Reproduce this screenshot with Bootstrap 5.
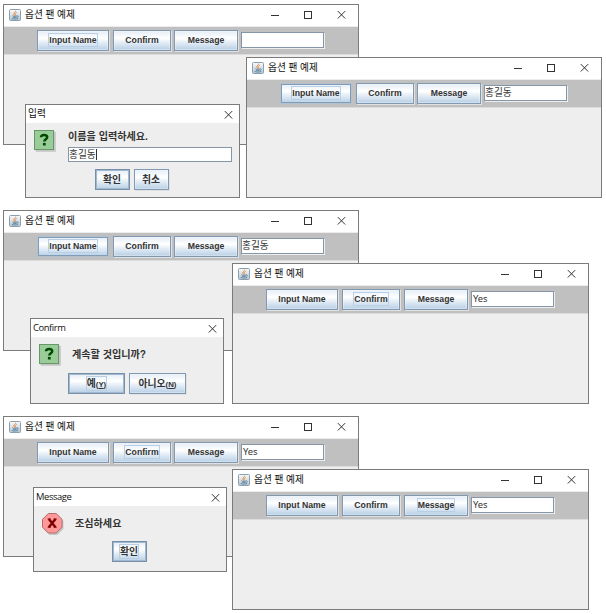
<!DOCTYPE html>
<html lang="ko">
<head>
  <meta charset="UTF-8" />
  <meta name="viewport" content="width=device-width, initial-scale=1.0"/>
  <title>옵션 팬 예제</title>

  <!-- Bootstrap CSS -->
  <link href="https://cdn.jsdelivr.net/npm/bootstrap@5.3.3/dist/css/bootstrap.min.css" rel="stylesheet" />

  <style>
    body {
      width: 606px;
      height: 614px;
      overflow: hidden;
      background: #fff;
      color: #333;
      font: 9.7px/1 "Liberation Sans", "Noto Sans CJK KR", sans-serif;
    }

    /* Windows on the desktop */
    .frame, .dialog {
      position: absolute;
      background: #eee;
      border: 1px solid #7b7b7b;
    }
    .frame { width: 356px; height: 141px; }
    .frame-1 { left: 3px; top: 4px; }
    .frame-2 { left: 246px; top: 57px; }
    .frame-3 { left: 3px; top: 210px; }
    .frame-4 { left: 232px; top: 263px; width: 357px; }
    .frame-5 { left: 3px; top: 416px; }
    .frame-6 { left: 232px; top: 469px; width: 357px; }
    .dialog-1 { left: 25px; top: 104px; width: 215px; height: 94px; }
    .dialog-2 { left: 30px; top: 318px; width: 194px; height: 86px; }
    .dialog-3 { left: 33px; top: 487px; width: 194px; height: 85px; }

    .titlebar {
      height: 22px;
      padding: 0 12px 1px 5px;
      background: #fff;
      border-bottom: 1px solid #ececec;
      color: #111;
    }
    .titlebar span { margin-left: 4px; white-space: pre; }
    .win-btns { gap: 24px; margin-top: 5px; }
    .win-btns svg:last-child { margin-left: 1px; }
    .dialog .titlebar { height: 18px; padding: 0 6px 0 2px; border: 0; }
    .dialog .titlebar span { margin-left: 0; }
    .dialog .titlebar .latin { font-family: "Open Sans", sans-serif; font-size: 9.4px; letter-spacing: -.4px; }
    svg { display: block; flex: none; }

    /* Metal look */
    .toolbar {
      height: 28px;
      padding: 3px 0 0 33px;
      gap: 3px;
      background: #c0c0c0;
      border-bottom: 1px solid #dcdcdc;
    }
    .metal {
      height: 21px;
      padding: 0;
      border: 1px solid #8098b0;
      border-radius: 0;
      background: linear-gradient(#e4edf6 0, #fff 38%, #e4edf6 60%, #b8cfe5 100%);
      box-shadow: inset 0 0 0 1px rgba(255, 255, 255, .3), 1px 1px 0 #e1e1e1;
      color: #333;
      font: bold 8.7px/1 "Liberation Sans", "Noto Sans CJK KR", sans-serif;
      white-space: nowrap;
    }
    .w-input { width: 72px; }
    .w-confirm { width: 58px; margin-left: 1px; }
    .w-message { width: 64px; }
    .frame-4 .w-message, .frame-6 .w-message { margin-left: 1px; }
    .focused span { outline: 1px solid #b8cfe5; padding: 1px 0; }
    .thick { border-color: #7590aa; box-shadow: inset 0 0 0 1px #a3b8cc; }
    .rollover { border-color: #b4c0cc; box-shadow: inset 0 0 0 1px #7f9cb9; }
    .field {
      height: 16px;
      border: 1px solid #8496a8;
      box-shadow: 1px 1px 0 #eee;
      background: #fff;
      font-size: 9.7px;
      color: #333;
    }
    .toolbar .field { width: 83px; margin-top: 2px; }
    .toolbar .latin { font-family: "Noto Sans", sans-serif; font-size: 9.4px; padding-left: 1px; }
    .prompt { font-size: 10.1px; font-weight: bold; white-space: nowrap; }

    /* Dialog bodies */
    .ask-body { padding: 7px 8px 0 8px; gap: 12px; }
    .ask-text { margin-left: -1px; padding-top: 2px; }
    .ask-text .prompt { padding-left: 1px; }
    .ask-text .field { width: 164px; height: 15px; margin: 5px 0 0 1px; }
    .caret { width: 1px; height: 11px; background: #333; }
    .ask-btns { margin: 7px 2px 0 0; gap: 4px; }
    .ask-btns .metal { width: 35px; font-size: 9.8px; }
    .confirm-body { padding: 7px 8px 0 8px; gap: 11px; }
    .confirm-body .prompt { padding-top: 6px; }
    .confirm-btns { padding-left: 37px; margin-top: 7px; gap: 4px; }
    .confirm-btns .metal { width: 57px; font-size: 9.8px; }
    .confirm-btns .metal small { font-size: 7.8px; }
    .notice-btns { margin: 6px 2px 0 0; }
    .notice-btns .metal { width: 35px; font-size: 9.8px; }
  </style>
</head>
<body class="position-relative m-0">

  <!-- Shared icons -->
  <svg width="0" height="0" class="position-absolute">
    <defs>
      <linearGradient id="tile" x1="0" y1="0" x2="0" y2="1">
        <stop offset="0" stop-color="#f8fafb"/><stop offset="1" stop-color="#b5c6d3"/>
      </linearGradient>
      <symbol id="java" viewBox="0 0 12 12">
        <rect x=".5" y=".5" width="11" height="11" rx="1" fill="url(#tile)" stroke="#8ba0ae"/>
        <path d="M6.5 1.7C7 3 4.4 3.7 4.8 5.1c.1.6.8 1 .8 1.5M7.7 3.2C6.3 4 5.7 4.6 6.4 5.5c.3.4.1.8-.2 1.1" fill="none" stroke="#e78231" stroke-width=".9"/>
        <path d="M3.4 6.9c1.4.6 3.5.5 4.8 0M4 8.2c1.1.5 2.6.4 3.7 0M8.3 6.8c1.5-.2 1.2 1.3-.2 1.6M2.7 9.4c1.6.8 4.8.8 6.5 0" fill="none" stroke="#4a7591" stroke-width=".8"/>
      </symbol>
      <symbol id="min" viewBox="0 0 9 9"><path d="M1 5.5h8" stroke="#333"/></symbol>
      <symbol id="max" viewBox="0 0 9 9"><rect x="1.5" y="1.5" width="7" height="7" fill="none" stroke="#333"/></symbol>
      <symbol id="close" viewBox="0 0 9 9"><path d="M.8 1.1l7.4 7.4M8.2 1.1L.8 8.5" stroke="#333" stroke-width="1" fill="none"/></symbol>
      <symbol id="question" viewBox="0 0 22 22">
        <path d="M2 2h20v20H2z" fill="#bbb" opacity=".45"/>
        <path d="M1.5 1.5h20v20h-20z" fill="#aaa" opacity=".4"/>
        <rect x=".5" y=".5" width="19" height="19" fill="#99cc99" stroke="#669966"/>
        <path d="M7 7.3C7.1 5.5 8.2 4.9 10.1 4.9c2 0 3.1.9 3.1 2.3 0 2.1-2.9 2-2.9 4.3" fill="none" stroke="#004b00" stroke-width="2.5"/>
        <rect x="8.9" y="12.9" width="2.8" height="2.6" fill="#004b00"/>
      </symbol>
      <symbol id="error" viewBox="0 0 22 22">
        <path d="M7.5 2h8l6 6v8l-6 6h-8l-6-6V8z" fill="#aaa" opacity=".55"/>
        <path d="M6.3.5h7.9l5.8 5.8v7.9L14.2 20H6.3L.5 14.2V6.3z" fill="#ff9999" stroke="#b46a6a"/>
        <path d="M6.8 6l6.7 8.2M13.5 6l-6.7 8.2" stroke="#800000" stroke-width="2.4"/>
        <path d="M5.7 6h3M11.7 6h3M5.7 14.2h3M11.7 14.2h3" stroke="#800000" stroke-width="1"/>
      </symbol>
    </defs>
  </svg>

  <!-- Input example -->
  <div class="frame frame-1">
    <div class="titlebar d-flex align-items-center">
      <svg width="12" height="12"><use href="#java"/></svg><span>옵션 팬 예제</span>
      <div class="win-btns d-flex align-self-start ms-auto">
        <svg width="9" height="9"><use href="#min"/></svg><svg width="9" height="9"><use href="#max"/></svg><svg width="9" height="9"><use href="#close"/></svg>
      </div>
    </div>
    <div class="toolbar d-flex align-items-start">
      <button class="btn metal w-input focused"><span>Input Name</span></button>
      <button class="btn metal w-confirm"><span>Confirm</span></button>
      <button class="btn metal w-message"><span>Message</span></button>
      <div class="field d-flex align-items-center"></div>
    </div>
  </div>

  <div class="frame frame-2">
    <div class="titlebar d-flex align-items-center">
      <svg width="12" height="12"><use href="#java"/></svg><span>옵션 팬 예제</span>
      <div class="win-btns d-flex align-self-start ms-auto">
        <svg width="9" height="9"><use href="#min"/></svg><svg width="9" height="9"><use href="#max"/></svg><svg width="9" height="9"><use href="#close"/></svg>
      </div>
    </div>
    <div class="toolbar d-flex align-items-start">
      <button class="btn metal w-input rollover focused"><span>Input Name</span></button>
      <button class="btn metal w-confirm"><span>Confirm</span></button>
      <button class="btn metal w-message"><span>Message</span></button>
      <div class="field d-flex align-items-center">홍길동</div>
    </div>
  </div>

  <div class="dialog dialog-1">
    <div class="titlebar d-flex align-items-center justify-content-between">
      <span>입력</span><svg width="9" height="9"><use href="#close"/></svg>
    </div>
    <div class="ask-body d-flex align-items-start">
      <svg width="22" height="22"><use href="#question"/></svg>
      <div class="ask-text">
        <div class="prompt">이름을 입력하세요.</div>
        <div class="field d-flex align-items-center">홍길동<i class="caret"></i></div>
      </div>
    </div>
    <div class="ask-btns d-flex justify-content-center">
      <button class="btn metal thick">확인</button>
      <button class="btn metal">취소</button>
    </div>
  </div>

  <!-- Confirm example -->
  <div class="frame frame-3">
    <div class="titlebar d-flex align-items-center">
      <svg width="12" height="12"><use href="#java"/></svg><span>옵션 팬 예제</span>
      <div class="win-btns d-flex align-self-start ms-auto">
        <svg width="9" height="9"><use href="#min"/></svg><svg width="9" height="9"><use href="#max"/></svg><svg width="9" height="9"><use href="#close"/></svg>
      </div>
    </div>
    <div class="toolbar d-flex align-items-start">
      <button class="btn metal w-input rollover focused"><span>Input Name</span></button>
      <button class="btn metal w-confirm"><span>Confirm</span></button>
      <button class="btn metal w-message"><span>Message</span></button>
      <div class="field d-flex align-items-center">홍길동</div>
    </div>
  </div>

  <div class="frame frame-4">
    <div class="titlebar d-flex align-items-center">
      <svg width="12" height="12"><use href="#java"/></svg><span>옵션 팬 예제</span>
      <div class="win-btns d-flex align-self-start ms-auto">
        <svg width="9" height="9"><use href="#min"/></svg><svg width="9" height="9"><use href="#max"/></svg><svg width="9" height="9"><use href="#close"/></svg>
      </div>
    </div>
    <div class="toolbar d-flex align-items-start">
      <button class="btn metal w-input"><span>Input Name</span></button>
      <button class="btn metal w-confirm focused"><span>Confirm</span></button>
      <button class="btn metal w-message"><span>Message</span></button>
      <div class="field latin d-flex align-items-center">Yes</div>
    </div>
  </div>

  <div class="dialog dialog-2">
    <div class="titlebar d-flex align-items-center justify-content-between">
      <span class="latin">Confirm</span><svg width="9" height="9"><use href="#close"/></svg>
    </div>
    <div class="confirm-body d-flex align-items-start">
      <svg width="22" height="22"><use href="#question"/></svg>
      <div class="prompt">계속할 것입니까?</div>
    </div>
    <div class="confirm-btns d-flex">
      <button class="btn metal thick focused"><span>예<small>(<u>Y</u>)</small></span></button>
      <button class="btn metal"><span>아니오<small>(<u>N</u>)</small></span></button>
    </div>
  </div>

  <!-- Message example -->
  <div class="frame frame-5">
    <div class="titlebar d-flex align-items-center">
      <svg width="12" height="12"><use href="#java"/></svg><span>옵션 팬 예제</span>
      <div class="win-btns d-flex align-self-start ms-auto">
        <svg width="9" height="9"><use href="#min"/></svg><svg width="9" height="9"><use href="#max"/></svg><svg width="9" height="9"><use href="#close"/></svg>
      </div>
    </div>
    <div class="toolbar d-flex align-items-start">
      <button class="btn metal w-input"><span>Input Name</span></button>
      <button class="btn metal w-confirm focused"><span>Confirm</span></button>
      <button class="btn metal w-message"><span>Message</span></button>
      <div class="field latin d-flex align-items-center">Yes</div>
    </div>
  </div>

  <div class="frame frame-6">
    <div class="titlebar d-flex align-items-center">
      <svg width="12" height="12"><use href="#java"/></svg><span>옵션 팬 예제</span>
      <div class="win-btns d-flex align-self-start ms-auto">
        <svg width="9" height="9"><use href="#min"/></svg><svg width="9" height="9"><use href="#max"/></svg><svg width="9" height="9"><use href="#close"/></svg>
      </div>
    </div>
    <div class="toolbar d-flex align-items-start">
      <button class="btn metal w-input"><span>Input Name</span></button>
      <button class="btn metal w-confirm"><span>Confirm</span></button>
      <button class="btn metal w-message focused"><span>Message</span></button>
      <div class="field latin d-flex align-items-center">Yes</div>
    </div>
  </div>

  <div class="dialog dialog-3">
    <div class="titlebar d-flex align-items-center justify-content-between">
      <span class="latin">Message</span><svg width="9" height="9"><use href="#close"/></svg>
    </div>
    <div class="confirm-body d-flex align-items-start">
      <svg width="22" height="22"><use href="#error"/></svg>
      <div class="prompt">조심하세요</div>
    </div>
    <div class="notice-btns d-flex justify-content-center">
      <button class="btn metal thick focused"><span>확인</span></button>
    </div>
  </div>

  <!-- Bootstrap JS (with Popper) -->
  <script src="https://cdn.jsdelivr.net/npm/bootstrap@5.3.3/dist/js/bootstrap.bundle.min.js"></script>
</body>
</html>
